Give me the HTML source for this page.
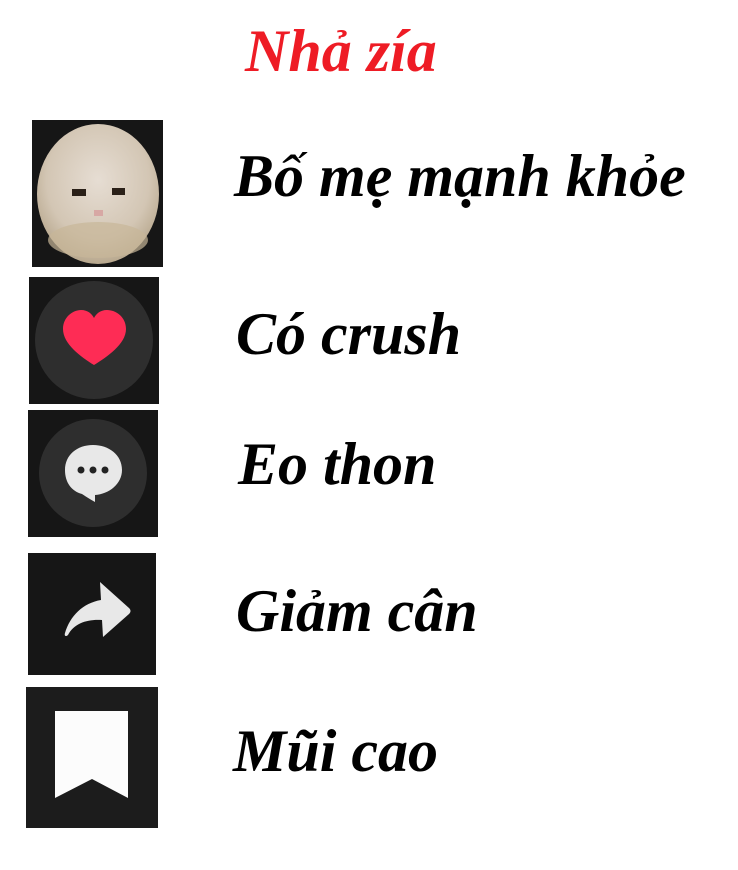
<!DOCTYPE html>
<html><head><meta charset="utf-8"><style>
html,body{margin:0;padding:0;background:#fff;width:738px;height:870px;overflow:hidden;position:relative}
.t{position:absolute;font-family:"Liberation Serif",serif;font-weight:bold;font-style:italic;white-space:nowrap;line-height:1}
.b{position:absolute;background:#161616}
</style></head><body>
<div class="t" style="left:245px;top:21px;font-size:60px;color:#ee1c25">Nhả zía</div>
<div class="t" style="left:234px;top:146px;font-size:60px;color:#000">Bố mẹ mạnh khỏe</div>
<div class="t" style="left:236px;top:304px;font-size:60px;color:#000">Có crush</div>
<div class="t" style="left:238px;top:434px;font-size:60px;color:#000">Eo thon</div>
<div class="t" style="left:236px;top:581px;font-size:60px;color:#000">Giảm cân</div>
<div class="t" style="left:233px;top:721px;font-size:60px;color:#000">Mũi cao</div>

<div class="b" style="left:32px;top:120px;width:131px;height:147px">
<svg width="131" height="147" style="position:absolute;left:0;top:0">
<defs><radialGradient id="g" cx="50%" cy="40%" r="60%"><stop offset="0" stop-color="#e6ddd3"/><stop offset="0.7" stop-color="#d3c6b4"/><stop offset="1" stop-color="#b8a88e"/></radialGradient></defs>
<ellipse cx="66" cy="74" rx="61" ry="70" fill="url(#g)"/>
<ellipse cx="66" cy="120" rx="50" ry="18" fill="#c7b698" opacity="0.7"/>
<rect x="40" y="69" width="14" height="7" fill="#2a2018"/>
<rect x="80" y="68" width="13" height="7" fill="#2a2018"/>
<rect x="62" y="90" width="9" height="6" fill="#d7a8a4"/>
</svg></div>

<div class="b" style="left:29px;top:277px;width:130px;height:127px">
<svg width="130" height="127" style="position:absolute;left:0;top:0">
<circle cx="65" cy="63" r="59" fill="#2e2e2e"/>
<path d="M65 88 C52 80 34 67 34 52 C34 40 44 33 52 33 C59 33 63 37 65 41 C67 37 71 33 78 33 C87 33 97 40 97 52 C97 67 78 80 65 88Z" fill="#fe2c55"/>
</svg></div>

<div class="b" style="left:28px;top:410px;width:130px;height:127px">
<svg width="130" height="127" style="position:absolute;left:0;top:0">
<circle cx="65" cy="63" r="54" fill="#2e2e2e"/>
<path d="M65 35 C81 35 94 45 94 60 C94 74 81 84 67 85 L67 92 C60 88 57 86 54 84 C43 81 37 72 37 60 C37 45 49 35 65 35Z" fill="#e8e8e8"/>
<circle cx="53" cy="60" r="3.5" fill="#222"/><circle cx="65" cy="60" r="3.5" fill="#222"/><circle cx="77" cy="60" r="3.5" fill="#222"/>
</svg></div>

<div class="b" style="left:28px;top:553px;width:128px;height:122px">
<svg width="128" height="122" style="position:absolute;left:0;top:0">
<path d="M72 29 L101 55 C103 57 103 59 101 61 L75 84 L74 67 C60 66 46 70 40 82 C38 84 36 83 37 80 C42 63 55 50 73 47 Z" fill="#e8e8e8"/>
</svg></div>

<div class="b" style="left:26px;top:687px;width:132px;height:141px;background:#1c1c1c">
<svg width="132" height="141" style="position:absolute;left:0;top:0">
<path d="M29 24 L102 24 L102 111 L66 92 L29 111 Z" fill="#fcfcfc"/>
</svg></div>
</body></html>
